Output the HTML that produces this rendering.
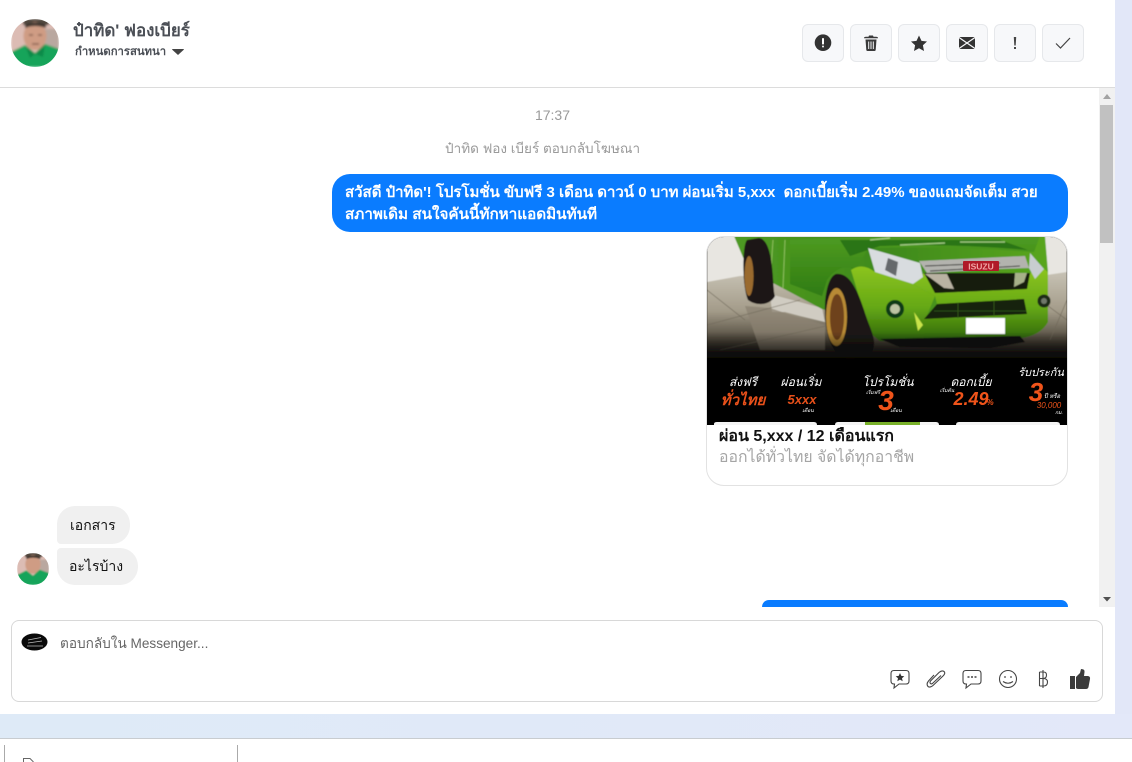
<!DOCTYPE html>
<html><head><meta charset="utf-8"><style>
*{box-sizing:border-box}
html,body{margin:0;padding:0;width:1132px;height:762px;overflow:hidden;background:#e2e7f8;font-family:"Liberation Sans","Noto Sans CJK SC",sans-serif;position:relative}
.a{position:absolute;white-space:nowrap}
.btn{position:absolute;top:24px;width:42px;height:38px;background:#f7f8fa;border:1px solid #e6e8eb;border-radius:6px}
.btn svg{position:absolute;left:10px;top:8px}
</style></head><body>
<div class="a" style="left:0;top:0;width:1115px;height:714px;background:#fff"></div>
<div class="a" style="left:0;top:87px;width:1115px;height:1px;background:#dcdcdc"></div>
<svg class="a" style="left:11px;top:19px" width="48" height="48" viewBox="0 0 48 48"><defs><clipPath id="c1"><circle cx="24" cy="24" r="24"/></clipPath><filter id="bl"><feGaussianBlur stdDeviation="1"/></filter></defs><g clip-path="url(#c1)"><g filter="url(#bl)"><rect width="48" height="48" fill="#dcbcb4"/><rect x="34" y="10" width="14" height="20" fill="#b9a8a0"/><rect x="12" y="0" width="26" height="6" fill="#51463e"/><ellipse cx="24" cy="17" rx="11.500" ry="14" fill="#cf9c84"/><path d="M14 6Q24 1 35 6L35 9Q24 5 14 9Z" fill="#3e342d"/><path d="M18 16H22M27 16H31M21 25H28" stroke="#6f4c3d" stroke-width="1.300"/><path d="M0 48V33L14 26L24 34L34 25L48 30V48Z" fill="#17a45a"/><path d="M14 26L24 35L19 39ZM34 25L24 35L32 38Z" fill="#0f8a48"/></g></g></svg>
<div class="a" style="left:73px;top:20px;font-size:16.900px;font-weight:bold;color:#4b4f56;line-height:22px">ป๋าทิด' ฟองเบียร์</div>
<div class="a" style="left:75px;top:45px;font-size:11.300px;font-weight:bold;color:#4b4f56;line-height:15px">กำหนดการสนทนา</div>
<svg class="a" style="left:172px;top:48px" width="12" height="8"><path d="M0 1.500Q0 1 1 1H11Q12 1 12 1.500L6 7Z" fill="#444"/></svg>

<div class="btn" style="left:802px"><svg width="20" height="20"><circle cx="10" cy="9.700" r="8.300" fill="#333"/><rect x="9" y="5" width="2" height="6.500" rx=".8" fill="#fff"/><rect x="9" y="12.500" width="2" height="2" rx="1" fill="#fff"/></svg></div>
<div class="btn" style="left:850px"><svg width="20" height="20"><path d="M4.500 6.500H15.500L14.700 17Q14.600 18 13.500 18H6.500Q5.400 18 5.300 17Z" fill="#3a3a3a"/><path d="M3 5.200Q3 3.800 5 3.800H7.500L8 2.500H12L12.500 3.800H15Q17 3.800 17 5.200Z" fill="#3a3a3a"/><path d="M7.700 8.500V16M10 8.500V16M12.300 8.500V16" stroke="#f7f8fa" stroke-width="1"/></svg></div>
<div class="btn" style="left:898px"><svg width="20" height="20"><path d="M10 2.500L12.500 7.900L18 8.500L13.900 12.300L15 18L10 15.200L5 18L6.100 12.300L2 8.500L7.500 7.900Z" fill="#333"/></svg></div>
<div class="btn" style="left:946px"><svg width="20" height="20"><rect x="2" y="4" width="16" height="12" rx="1" fill="#333"/><path d="M2 4.500L18 15.500M18 4.500L2 15.500" stroke="#f7f8fa" stroke-width="1.200"/></svg></div>
<div class="btn" style="left:994px"><svg width="20" height="20"><path d="M8.800 4H11.200L10.700 12.500H9.300Z" fill="#444"/><rect x="9" y="14" width="2" height="2" fill="#444"/></svg></div>
<div class="btn" style="left:1042px"><svg width="20" height="20"><path d="M3 10.500L7.500 15L17 5" fill="none" stroke="#444" stroke-width="1.200"/></svg></div>

<div class="a" style="left:0;width:1099px;top:107px;text-align:center;font-size:14px;color:#9a9a9a;line-height:16px;padding-left:6px">17:37</div>
<div class="a" style="left:445px;top:140px;font-size:13.550px;color:#9a9a9a;line-height:18px">ป๋าทิด ฟอง เบียร์ ตอบกลับโฆษณา</div>

<div class="a" style="left:332px;top:174px;width:736px;height:58px;background:#0a7cff;border-radius:18px"></div>
<div class="a" style="left:345px;top:182px;font-size:15px;font-weight:bold;color:#fff;line-height:22px;letter-spacing:-.01px">สวัสดี ป๋าทิด'! โปรโมชั่น ขับฟรี 3 เดือน ดาวน์ 0 บาท ผ่อนเริ่ม 5,xxx&nbsp; ดอกเบี้ยเริ่ม 2.49% ของแถมจัดเต็ม สวย<br><span style="font-size:15.250px">สภาพเดิม สนใจคันนี้ทักหาแอดมินทันที</span></div>

<div class="a" style="left:706px;top:236px;width:362px;height:250px;border:1px solid #e2e2e2;border-radius:18px;overflow:hidden;background:#fff">
<svg class="a" style="left:0;top:0" width="360" height="188" viewBox="707 237 360 188">
<defs><linearGradient id="fl" x1="0" y1="0" x2="0" y2="1"><stop offset="0" stop-color="#c7c2b4"/><stop offset=".4" stop-color="#a39b89"/><stop offset=".7" stop-color="#4e473b"/><stop offset=".95" stop-color="#050505"/></linearGradient>
<linearGradient id="gs" x1="0" y1="0" x2="1" y2="0"><stop offset="0" stop-color="#4f9a22"/><stop offset=".5" stop-color="#3f8a1a"/><stop offset="1" stop-color="#5aa61f"/></linearGradient>
<linearGradient id="gc" x1="0" y1="0" x2="0" y2="1"><stop offset="0" stop-color="#8cc41e"/><stop offset=".55" stop-color="#65a816"/><stop offset="1" stop-color="#2f660a"/></linearGradient>
<linearGradient id="gh" x1="0" y1="0" x2="0" y2="1"><stop offset="0" stop-color="#4f9c22"/><stop offset="1" stop-color="#2f7b12"/></linearGradient>
<linearGradient id="dk" x1="0" y1="0" x2="0" y2="1"><stop offset="0" stop-color="#000" stop-opacity="0"/><stop offset="1" stop-color="#030303"/></linearGradient>
<filter id="b2"><feGaussianBlur stdDeviation=".5"/></filter></defs>
<rect x="707" y="237" width="360" height="188" fill="#000"/>
<g filter="url(#b2)">
<rect x="707" y="236" width="360" height="50" fill="#e8e6e1"/>
<path d="M707 282L740 276H1040L1067 272V370H707Z" fill="url(#fl)"/>
<path d="M770 294L822 308L825 322L800 316L785 312L772 312Z" fill="#d0ccc2"/>
<path d="M745 306L770 308L800 318L825 325V350H760Z" fill="#8b8272" opacity=".75"/>
<path d="M707 290L745 320M707 325L800 300M720 350L830 325M1040 300L1067 320M1050 340L1067 300" stroke="#6f6859" stroke-width=".6" fill="none"/>
<path d="M734 236H1045L1048 272L1048 322Q1040 336 1020 338L880 341L860 320L822 309L773 283L745 262Z" fill="url(#gs)"/>
<path d="M773 240L770 285M785 240L783 288" stroke="#9ec96a" stroke-width="1" opacity=".8"/>
<path d="M804 260Q812 250 820 260L818 278Q808 270 804 270Z" fill="#2e7a14" opacity=".6"/>
<circle cx="816" cy="249" r="2" fill="#d9562a"/>
<path d="M790 240Q850 236 1040 236L1034 252Q950 246 868 248L856 270Q840 262 827 280L822 296L790 284Z" fill="url(#gh)"/>
<path d="M840 240H1000L1028 250Q950 243 880 246L850 256Z" fill="#2c7413"/>
<path d="M900 245L945 243M960 242H1005M870 240L890 238" stroke="#b9d89a" stroke-width="1.500" opacity=".8"/>
<path d="M851 270Q862 262 875 272L913 284L935 296L926 318L923 340L880 341L866 330L860 300Z" fill="url(#gc)"/>
<path d="M913 284L924 273L935 293L1027 289L1030 273L1044 269L1048 272L1048 322Q1040 336 1020 338L923 340L925 318L937 304L935 296Z" fill="url(#gc)"/>
<path d="M868 248L920 263L923 277L913 284L875 272Z" fill="#d8dcdf"/>
<path d="M888 258L898 262L896 276L885 270Z" fill="#65696c"/>
<path d="M924 273L1030 273L1027 289L935 293Z" fill="#141a10"/>
<path d="M919 261L1025 256L1029 268L1000 269L927 273Z" fill="#b3b3ae"/>
<path d="M925 266L1000 263M930 271L1020 266" stroke="#3a3a38" stroke-width="1"/>
<path d="M925 274L947 274L954 289L944 288Z" fill="#b9b2a2"/>
<path d="M1015 273L1027 273L1024 282L1014 287Z" fill="#a7b189"/>
<path d="M1030 253L1044 269L1035 279L1029 268Z" fill="#c8cdd0"/>
<path d="M924 319L937 304L1024 299L1027 314Z" fill="#16240c"/>
<path d="M934 311H1026M958 303V318M994 301V316" stroke="#355c1a" stroke-width=".8"/>
<path d="M914 312L923 325L918 331Z" fill="#c9e44a"/>
<circle cx="895" cy="309" r="9" fill="#0f3a12"/><circle cx="895" cy="309" r="5" fill="#bcc4a3"/>
<circle cx="1044" cy="301" r="6.500" fill="#1a2a12"/><circle cx="1044" cy="301" r="3" fill="#70786a"/>
<path d="M880 339L1020 336L1025 342L990 348L900 347Z" fill="#101010"/>
<path d="M759 238C775 240 772 290 775 296C770 306 756 306 748 300C742 286 742 246 747 240Z" fill="#1b1715"/>
<ellipse cx="749" cy="276" rx="4.500" ry="20" fill="#9a6a2f"/>
<path d="M836 274C850 272 858 292 864 310C870 330 878 340 872 352C860 360 846 360 840 356C830 348 824 330 825 304C826 288 830 276 836 274Z" fill="#1c1916"/>
<ellipse cx="836.500" cy="317" rx="10.500" ry="29" fill="#b78a35"/><ellipse cx="837" cy="317" rx="7" ry="23" fill="#6e421d"/>
<rect x="966" y="318" width="39" height="16" fill="#fff"/>
<rect x="707" y="332" width="360" height="32" fill="url(#dk)"/>
<rect x="707" y="363" width="360" height="63" fill="#030303"/>
</g>
<rect x="963" y="261" width="36" height="10" rx="1" fill="#b01a28"/>
<text x="981" y="269.500" font-size="8.500" font-weight="bold" text-anchor="middle" fill="#f2a5a5" font-family="Liberation Sans,sans-serif">ISUZU</text>
<g font-family="Liberation Sans,sans-serif" font-style="italic" text-anchor="middle">
<text x="743" y="386" font-size="12" fill="#fff">ส่งฟรี</text><text x="743" y="405" font-size="15" font-weight="bold" fill="#e8501a">ทั่วไทย</text>
<text x="801" y="386" font-size="12" fill="#fff">ผ่อนเริ่ม</text><text x="802" y="404" font-size="13" font-weight="bold" fill="#e8501a">5xxx</text><text x="808" y="412" font-size="5" fill="#fff">เดือน</text>
<text x="888" y="386" font-size="12" fill="#fff">โปรโมชั่น</text><text x="886" y="410" font-size="28" font-weight="bold" fill="#f0541a">3</text><text x="873" y="394" font-size="5" fill="#fff">เริ่มฟรี</text><text x="896" y="412" font-size="5" fill="#fff">เดือน</text>
<text x="971" y="386" font-size="12" fill="#fff">ดอกเบี้ย</text><text x="971" y="405" font-size="18" font-weight="bold" fill="#f0541a">2.49</text><text x="990" y="405" font-size="8" font-weight="bold" fill="#f0541a">%</text><text x="947" y="392" font-size="5" fill="#fff">เริ่มต้น</text>
<text x="1041" y="376" font-size="11" fill="#fff">รับประกัน</text><text x="1036" y="401" font-size="26" font-weight="bold" fill="#f0541a">3</text><text x="1052" y="398" font-size="6" fill="#fff">ปี หรือ</text><text x="1049" y="408" font-size="8" fill="#f0541a">30,000</text><text x="1059" y="414" font-size="5" fill="#fff">กม.</text>
</g>
<path d="M714 425V424Q714 422 717 422H814Q817 422 817 425ZM835 425Q835 422 838 422H936Q939 422 939 425ZM956 425Q956 422 959 422H1057Q1060 422 1060 425Z" fill="#f4f4f4"/>
<path d="M865 422H920V425H865Z" fill="#79b12a"/>
</svg>
<div class="a" style="left:12px;top:189px;font-size:16px;font-weight:bold;color:#111;line-height:21px">ผ่อน 5,xxx / 12 เดือนแรก</div>
<div class="a" style="left:12px;top:210px;font-size:15.800px;color:#a5a5a5;line-height:21px">ออกได้ทั่วไทย จัดได้ทุกอาชีพ</div>
</div>

<div class="a" style="left:57px;top:506px;width:73px;height:38px;background:#f0f0f0;border-radius:18px 18px 18px 4px"></div>
<div class="a" style="left:70px;top:515px;font-size:14px;color:#111;line-height:20px">เอกสาร</div>
<div class="a" style="left:57px;top:548px;width:81px;height:37px;background:#f0f0f0;border-radius:4px 18px 18px 18px"></div>
<div class="a" style="left:69px;top:556px;font-size:14px;color:#111;line-height:20px">อะไรบ้าง</div>
<svg class="a" style="left:17px;top:553px" width="32" height="32" viewBox="0 0 48 48"><g clip-path="url(#c1)"><g filter="url(#bl)"><rect width="48" height="48" fill="#dcbcb4"/><rect x="34" y="10" width="14" height="20" fill="#b9a8a0"/><rect x="12" y="0" width="26" height="6" fill="#51463e"/><ellipse cx="24" cy="17" rx="11.500" ry="14" fill="#cf9c84"/><path d="M14 6Q24 1 35 6L35 9Q24 5 14 9Z" fill="#3e342d"/><path d="M0 48V33L14 26L24 34L34 25L48 30V48Z" fill="#17a45a"/></g></g></svg>

<div class="a" style="left:0;top:607px;width:1115px;height:107px;background:#fff"></div>
<div class="a" style="left:762px;top:600px;width:306px;height:7px;background:#0a7cff;border-radius:16px 16px 0 0"></div>

<div class="a" style="left:1099px;top:88px;width:16px;height:519px;background:#f1f1f1"></div>
<div class="a" style="left:1100px;top:105px;width:13px;height:138px;background:#c1c1c1"></div>
<svg class="a" style="left:1099px;top:88px" width="16" height="16"><path d="M4 11L8 6L12 11Z" fill="#a3a3a3"/></svg>
<svg class="a" style="left:1099px;top:591px" width="16" height="16"><path d="M4 6H12L8 10.500Z" fill="#505050"/></svg>

<div class="a" style="left:11px;top:620px;width:1092px;height:82px;background:#fff;border:1px solid #d8d8d8;border-radius:8px"></div>
<svg class="a" style="left:21px;top:633px" width="27" height="19"><ellipse cx="13.500" cy="9" rx="13" ry="8.500" fill="#0a0a0a"/><path d="M7 7L20 4.500M7 10L21 8M6 13H22" stroke="#bbb" stroke-width=".8"/></svg>
<div class="a" style="left:60px;top:635px;font-size:13.600px;color:#666;line-height:18px">ตอบกลับใน Messenger...</div>

<svg class="a" style="left:888px;top:667px" width="206" height="26" viewBox="0 0 206 26" fill="none" stroke="#444" stroke-width="1.100">
<path d="M6 3.500H18Q21 3.500 21 6.500V14Q21 17 18 17H11L6 21L6.500 17H6Q3 17 3 14V6.500Q3 3.500 6 3.500Z"/><path d="M12 6L13.300 8.900L16.300 9.200L14 11.200L14.700 14.200L12 12.600L9.300 14.200L10 11.200L7.700 9.200L10.700 8.900Z" fill="#333" stroke="none"/>
<path d="M46 8L40.500 14Q38 17 40 19.500Q42 21 45 18.500L55 9Q58 6 56 4.500Q54 3 51 5.500L42.500 14Q41.500 15.500 42.500 16.500Q43.500 17.500 45 16L53 8.500"/>
<path d="M78 3.500H90Q93 3.500 93 6.500V14Q93 17 90 17H83L78 21L78.500 17H78Q75 17 75 14V6.500Q75 3.500 78 3.500Z"/><path d="M79.500 10H81.500M83 10H85M86.500 10H88.500" stroke-width="1.500"/>
<circle cx="120" cy="12" r="8.500"/><circle cx="117" cy="10" r=".9" fill="#444" stroke="none"/><circle cx="123" cy="10" r=".9" fill="#444" stroke="none"/><path d="M115 14.500Q120 18 125 14.500"/>
<path d="M151.500 5V19M151.500 5H155.500Q158.500 5 158.500 8Q158.500 11.500 155 11.500H151.500M155 11.500Q159.500 11.500 159.500 15Q159.500 19 155.500 19H151.500M155 3V21"/>
<path d="M182 9H187V22H182Z M188 10L192 6L193 2Q197 2 196.500 5L196 9H200Q202.500 9.500 202 12L200.500 20Q200 22 198 22H190Q188.500 22 188 21Z" fill="#3c3c3c" stroke="none"/>
</svg>

<div class="a" style="left:0;top:714px;width:1132px;height:24px;background:linear-gradient(90deg,#deeaf7,#e3e8f9)"></div>
<div class="a" style="left:0;top:738px;width:1132px;height:24px;background:#fff;border-top:1px solid #c8ccd0"></div>
<div class="a" style="left:4px;top:745px;width:1px;height:17px;background:#aaa"></div>
<div class="a" style="left:237px;top:745px;width:1px;height:17px;background:#aaa"></div>
<svg class="a" style="left:23px;top:758px" width="12" height="4"><path d="M.5 4V.5H7L10.500 4" fill="none" stroke="#666"/></svg>
</body></html>
